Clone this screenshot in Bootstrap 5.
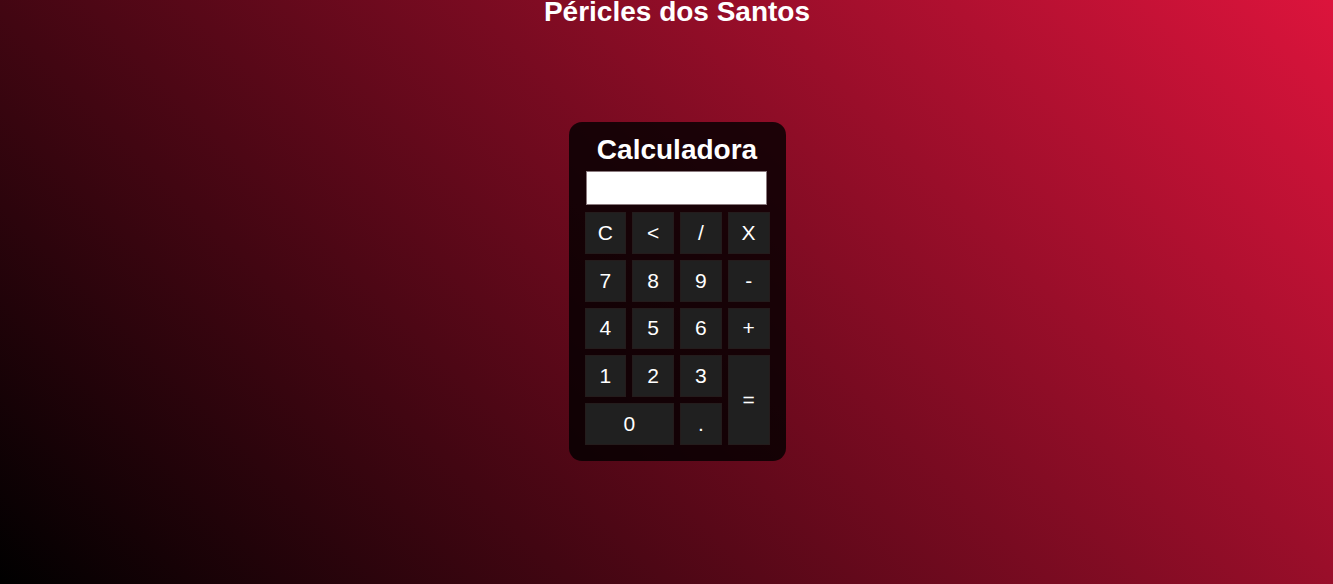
<!DOCTYPE html>
<html lang="pt-br">
<head>
<meta charset="utf-8">
<meta name="viewport" content="width=device-width, initial-scale=1">
<title>Calculadora</title>
<link href="https://cdn.jsdelivr.net/npm/bootstrap@5.3.0/dist/css/bootstrap.min.css" rel="stylesheet">
<style>
  body {
    font-family: "Liberation Sans", Arial, sans-serif;
    background: linear-gradient(45deg, #000, crimson) no-repeat;
    padding-left: 21px;
  }
  h1 { font-size: 28px; line-height: 24px; font-weight: 700; }
  .author { margin-bottom: 98px; }
  .calculator {
    width: 217px;
    padding: 16px;
    border-radius: 13px;
    background: rgba(0, 0, 0, .8);
  }
  .display {
    width: 181px;
    height: 34px;
    margin: 9px 1px 7px;
    border: 1px solid #8a7a7e;
    background: #fff;
    font-size: 24px;
  }
  .keys {
    display: grid;
    grid-template-columns: repeat(4, 1fr);
    grid-template-rows: repeat(5, 1fr);
    gap: 6px;
    height: 233px;
  }
  .key {
    --bs-btn-color: #fff;
    --bs-btn-bg: #202020;
    --bs-btn-hover-color: #fff;
    --bs-btn-hover-bg: #000;
    --bs-btn-border-color: #241c1c;
    --bs-btn-font-size: 21px;
    --bs-btn-line-height: 24px;
    --bs-btn-border-radius: 0;
  }
  .key-wide { grid-column: span 2; }
  .key-tall { grid-row: span 2; }
</style>
</head>
<body class="min-vh-100 d-flex flex-column align-items-center text-white">
  <h1 class="author">Péricles dos Santos</h1>
  <main class="calculator">
    <h1 class="text-center mb-0">Calculadora</h1>
    <input class="display d-block" type="text" aria-label="Resultado" readonly>
    <div class="keys">
      <button type="button" class="btn key p-0">C</button>
      <button type="button" class="btn key p-0">&lt;</button>
      <button type="button" class="btn key p-0">/</button>
      <button type="button" class="btn key p-0">X</button>
      <button type="button" class="btn key p-0">7</button>
      <button type="button" class="btn key p-0">8</button>
      <button type="button" class="btn key p-0">9</button>
      <button type="button" class="btn key p-0">-</button>
      <button type="button" class="btn key p-0">4</button>
      <button type="button" class="btn key p-0">5</button>
      <button type="button" class="btn key p-0">6</button>
      <button type="button" class="btn key p-0">+</button>
      <button type="button" class="btn key p-0">1</button>
      <button type="button" class="btn key p-0">2</button>
      <button type="button" class="btn key p-0">3</button>
      <button type="button" class="btn key key-tall p-0">=</button>
      <button type="button" class="btn key key-wide p-0">0</button>
      <button type="button" class="btn key p-0">.</button>
    </div>
  </main>
  <script src="https://cdn.jsdelivr.net/npm/bootstrap@5.3.0/dist/js/bootstrap.bundle.min.js"></script>
</body>
</html>
